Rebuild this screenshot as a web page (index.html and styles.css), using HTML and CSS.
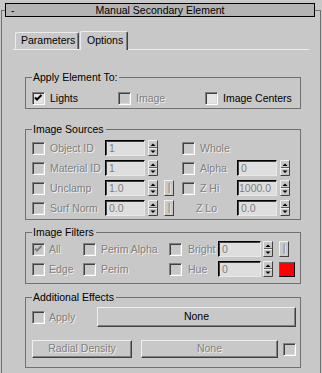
FILE: index.html
```html
<!DOCTYPE html>
<html lang="en">
<head>
  <meta charset="UTF-8">
  <title>Manual Secondary Element</title>
  <link rel="stylesheet" href="styles.css">
</head>
<body>
  <div class="rollout">
    <div class="title"><span class="minus">-</span><span class="title-text">Manual Secondary Element</span><span></span></div>
    <div class="frame">
      <div class="tabs">
        <div class="tab tab-params">Parameters</div>
        <div class="tab tab-options active">Options</div>
      </div>

      <fieldset class="group g-apply">
        <legend>Apply Element To:</legend>
        <div class="row apply-row">
          <span class="cb on"></span><span class="lbl">Lights</span>
          <span class="cb dis"></span><span class="lbl dis">Image</span>
          <span class="cb"></span><span class="lbl">Image Centers</span>
        </div>
      </fieldset>

      <fieldset class="group g-sources">
        <legend>Image Sources</legend>
        <div class="src-grid">
          <span class="cb dis"></span><span class="lbl dis">Object ID</span>
          <span class="field">1</span><span class="spin"></span><span></span>
          <span class="cb dis"></span><span class="lbl dis">Whole</span><span></span><span></span>

          <span class="cb dis"></span><span class="lbl dis">Material ID</span>
          <span class="field">1</span><span class="spin"></span><span></span>
          <span class="cb dis"></span><span class="lbl dis">Alpha</span>
          <span class="field">0</span><span class="spin"></span>

          <span class="cb dis"></span><span class="lbl dis">Unclamp</span>
          <span class="field">1.0</span><span class="spin"></span><span class="pipe">|</span>
          <span class="cb dis"></span><span class="lbl dis">Z Hi</span>
          <span class="field full">1000.0</span><span class="spin"></span>

          <span class="cb dis"></span><span class="lbl dis">Surf Norm</span>
          <span class="field">0.0</span><span class="spin"></span><span class="pipe">|</span>
          <span class="lbl dis zlo">Z Lo</span>
          <span class="field">0.0</span><span class="spin"></span>
        </div>
      </fieldset>

      <fieldset class="group g-filters">
        <legend>Image Filters</legend>
        <div class="flt-grid">
          <span class="cb dis on"></span><span class="lbl dis">All</span>
          <span class="cb dis"></span><span class="lbl dis">Perim Alpha</span>
          <span class="cb dis"></span><span class="lbl dis">Bright</span>
          <span class="field wide">0</span><span class="spin"></span><span class="pipe">|</span>

          <span class="cb dis"></span><span class="lbl dis">Edge</span>
          <span class="cb dis"></span><span class="lbl dis">Perim</span>
          <span class="cb dis"></span><span class="lbl dis">Hue</span>
          <span class="field wide">0</span><span class="spin"></span><span class="swatch"></span>
        </div>
      </fieldset>

      <fieldset class="group g-effects">
        <legend>Additional Effects</legend>
        <div class="fx-row1">
          <span class="cb dis"></span><span class="lbl dis">Apply</span>
          <span class="btn btn-none">None</span>
        </div>
        <div class="fx-row2">
          <span class="btn btn-radial dis">Radial Density</span>
          <span class="btn btn-none2 dis">None</span>
          <span class="cb dis"></span>
        </div>
      </fieldset>
    </div>
  </div>
</body>
</html>
```

FILE: styles.css
```css
body {
  margin: 0;
  background: #c8c8c8;
  font-family: "Liberation Sans", Arial, sans-serif;
  font-size: 10.5px;
  color: #000;
  overflow: hidden;
}
.rollout {
  padding-top: 3px;
}
.title {
  position: relative;
  z-index: 1;
  margin-left: 5px;
  width: 310px;
  height: 14px;
  box-sizing: border-box;
  border: 1px solid #000;
  background: #b4b4b4;
  display: grid;
  grid-template-columns: 20px 1fr 20px;
  align-items: center;
  line-height: 12px;
}
.minus {
  padding-left: 5px;
}
.title-text {
  text-align: center;
}
.frame {
  margin: -7px 0 0 1px;
  width: 320px;
  height: 363px;
  box-sizing: border-box;
  border: 1px solid #707070;
  border-bottom: none;
}

/* tabs */
.tabs {
  display: flex;
  align-items: flex-end;
  margin: 20px 0 0 11px;
  width: 296px;
  height: 19px;
  box-sizing: border-box;
  border-bottom: 1px solid #ececec;
}
.tab {
  box-sizing: border-box;
  height: 17px;
  line-height: 15px;
  border-top: 1px solid #ececec;
  border-left: 1px solid #ececec;
  border-right: 1px solid #404040;
  box-shadow: inset -1px 0 #808080;
  border-radius: 2px 2px 0 0;
}
.tab-params {
  margin-left: 2px;
  width: 64px;
  padding-left: 5px;
}
.tab-options {
  margin-left: 1px;
  width: 48px;
  padding-left: 6px;
}
.tab.active {
  height: 19px;
  margin-bottom: -1px;
  line-height: 16px;
  background: #c8c8c8;
}

/* group boxes */
.group {
  margin: 0 0 0 23px;
  width: 276px;
  min-width: 0;
  box-sizing: border-box;
  border: 1px solid #707070;
  padding: 0 6px;
}
.group legend {
  padding: 0 2px 0 1px;
  line-height: 13px;
}
.g-apply {
  margin-top: 21px;
  padding-bottom: 2px;
}
.g-sources {
  margin-top: 14px;
  padding-top: 2px;
  padding-bottom: 1px;
}
.g-filters {
  margin-top: 6px;
  padding-bottom: 4px;
}
.g-effects {
  margin-top: 7px;
  padding-bottom: 9px;
}

.lbl.dis,
.dis {
  color: #808080;
  text-shadow: 1px 1px 0 #f2f2f2;
}
.lbl {
  white-space: nowrap;
}

.apply-row {
  display: grid;
  grid-template-columns: 18px 68px 18px 69px 18px auto;
  align-items: center;
  height: 16px;
  margin-top: 6px;
}

/* checkbox */
.cb {
  display: block;
  width: 13px;
  height: 13px;
  box-sizing: border-box;
  border: 1px solid;
  border-color: #808080 #ffffff #ffffff #808080;
  box-shadow: inset 1px 1px #404040, inset -1px -1px #d8d8d8;
  background: #e4e4e4;
}
.cb.dis {
  background: #c8c8c8;
}
.cb.on {
  background-image: url("data:image/svg+xml,%3Csvg xmlns='http://www.w3.org/2000/svg' width='11' height='11'%3E%3Cpath d='M2 4.5 L4 6.5 L8.5 2' fill='none' stroke='%23000' stroke-width='2'/%3E%3C/svg%3E");
  background-repeat: no-repeat;
  background-position: 0 0;
}
.cb.dis.on {
  background-image: url("data:image/svg+xml,%3Csvg xmlns='http://www.w3.org/2000/svg' width='11' height='11'%3E%3Cpath d='M2 4.5 L4 6.5 L8.5 2' fill='none' stroke='%23808080' stroke-width='2'/%3E%3C/svg%3E");
}

/* text field */
.field {
  display: block;
  height: 16px;
  box-sizing: border-box;
  border: 1px solid;
  border-color: #000 #e8e8e8 #e8e8e8 #000;
  box-shadow: inset 1px 1px #404040;
  background: #dedede;
  color: #808080;
  padding-left: 3px;
  line-height: 14px;
  overflow: hidden;
  white-space: nowrap;
  width: 40px;
}
.field.full {
  padding-left: 1px;
}
.field.wide {
  width: 43px;
}

/* spinner */
.spin {
  display: block;
  width: 10px;
  height: 16px;
  background-image: url("data:image/svg+xml,%3Csvg xmlns='http://www.w3.org/2000/svg' width='10' height='16'%3E%3Crect x='0' y='0' width='10' height='16' fill='%23c8c8c8'/%3E%3Cpath d='M0.5 15.5V0.5H9.5' fill='none' stroke='%23f0f0f0'/%3E%3Cpath d='M9.5 0.5V15.5H0.5' fill='none' stroke='%23404040'/%3E%3Cpath d='M1 7.5H9' stroke='%23606060'/%3E%3Cpath d='M1 8.5H9' stroke='%23f0f0f0'/%3E%3Cpolygon points='2.5,6 5,3.5 7.5,6' fill='%23000'/%3E%3Cpolygon points='2.5,10.5 7.5,10.5 5,13' fill='%23000'/%3E%3C/svg%3E");
}

/* small pipe button */
.pipe {
  display: block;
  width: 10px;
  height: 16px;
  box-sizing: border-box;
  border: 1px solid;
  border-color: #f0f0f0 #404040 #404040 #f0f0f0;
  color: #808080;
  text-shadow: 1px 1px 0 #f2f2f2;
  text-align: center;
  line-height: 13px;
}

.src-grid {
  display: grid;
  grid-template-columns: 18px 55px 43px 16px 18px 18px 37px 43px 10px;
  grid-auto-rows: 20px;
  align-items: center;
}
.zlo {
  grid-column: span 2;
  padding-left: 14px;
}

.flt-grid {
  display: grid;
  grid-template-columns: 17px 34px 18px 68px 19px 30px 45px 16px 16px;
  grid-auto-rows: 20px;
  align-items: center;
}
.swatch {
  display: block;
  width: 16px;
  height: 15px;
  box-sizing: border-box;
  background: #ff0000;
  border: 1px solid;
  border-color: #606060 #000 #000 #606060;
}

/* buttons */
.btn {
  display: block;
  box-sizing: border-box;
  border: 1px solid;
  border-color: #f0f0f0 #404040 #404040 #f0f0f0;
  box-shadow: inset -1px -1px #808080;
  text-align: center;
  white-space: nowrap;
}
.fx-row1 {
  display: grid;
  grid-template-columns: 17px 48px 199px;
  align-items: center;
  height: 20px;
  margin-top: 3px;
}
.btn-none {
  height: 20px;
  line-height: 17px;
}
.fx-row2 {
  display: grid;
  grid-template-columns: 109px 142px 13px;
  align-items: center;
  height: 18px;
  margin-top: 13px;
}
.btn-radial {
  width: 100px;
  height: 18px;
  line-height: 15px;
}
.btn-none2 {
  width: 137px;
  height: 18px;
  line-height: 15px;
}
```
